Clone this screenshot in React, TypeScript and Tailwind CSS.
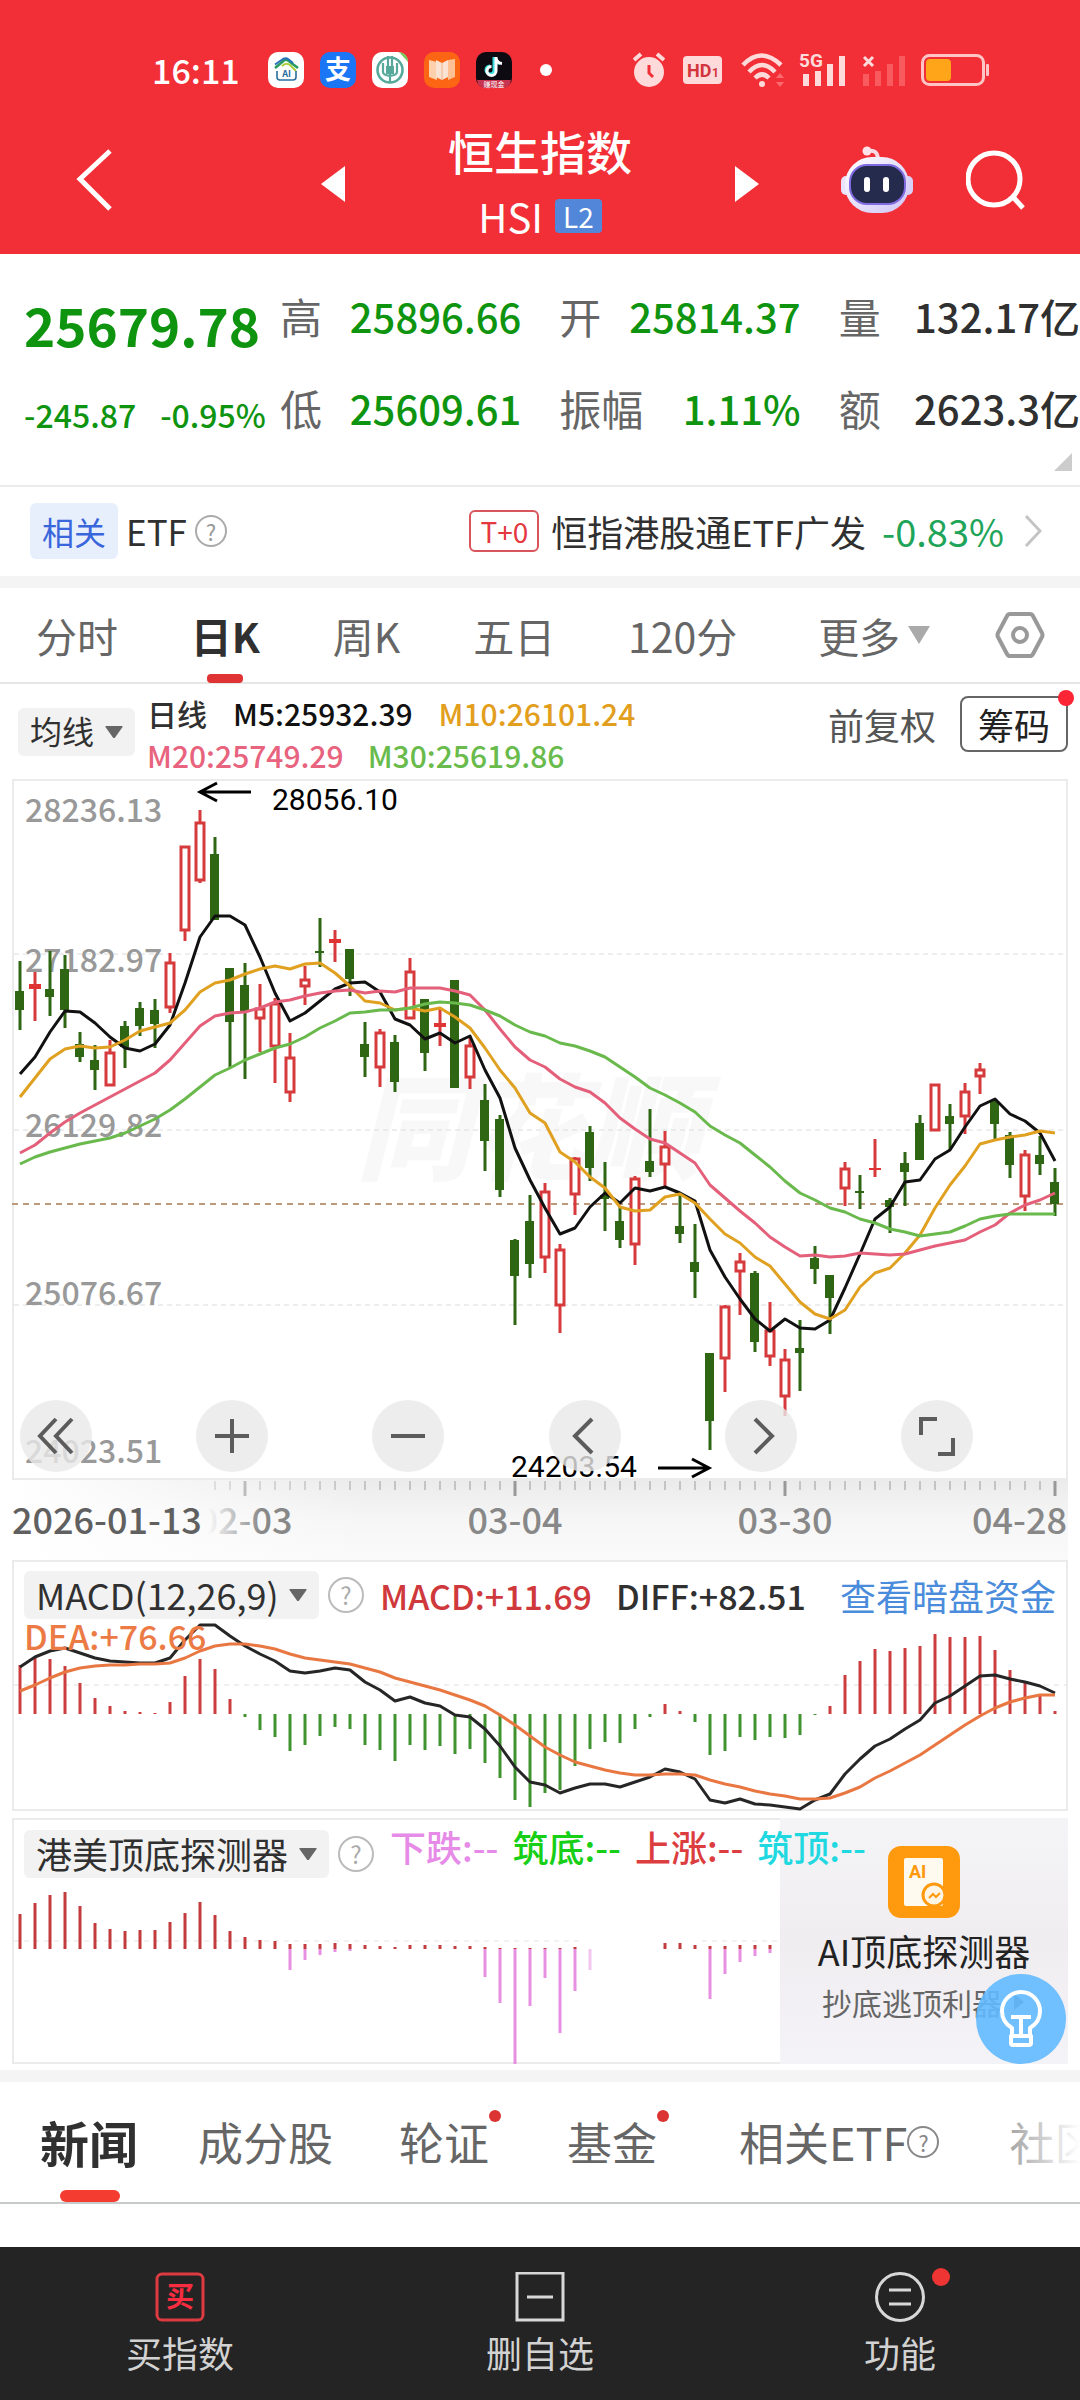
import type { ReactNode } from 'react'

const STEP = 15
const X0 = 8

const xAt = (i: number) => X0 + i * STEP
const linePoints = (ys: number[]) => ys.map((y, i) => `${xAt(i)},${y}`).join(' ')

// [high, body top, body bottom, low, rising]
const candles: [number, number, number, number, number][] = [
  [182, 212, 231, 251, 0], [193, 205, 210, 242, 1], [172, 210, 218, 237, 0], [176, 190, 231, 249, 0],
  [253, 265, 278, 283, 0], [266, 281, 291, 311, 0], [261, 273, 307, 307, 1], [242, 247, 268, 289, 0],
  [223, 229, 247, 257, 0], [220, 231, 245, 269, 0], [174, 183, 229, 234, 1], [67, 67, 152, 162, 1],
  [31, 43, 102, 104, 1], [58, 75, 141, 141, 0], [189, 189, 243, 288, 0], [184, 206, 232, 300, 0],
  [205, 229, 240, 273, 1], [219, 224, 268, 304, 1], [254, 278, 314, 323, 1], [187, 200, 208, 226, 1],
  [139, 172, 174, 188, 0], [151, 160, 164, 183, 1], [170, 170, 200, 217, 0], [243, 265, 278, 298, 0],
  [250, 253, 289, 308, 1], [256, 263, 303, 313, 0], [179, 192, 240, 240, 1], [220, 220, 274, 292, 0],
  [228, 244, 248, 267, 1], [201, 201, 309, 309, 0], [258, 266, 299, 310, 1], [305, 321, 362, 392, 0],
  [336, 340, 411, 418, 0], [460, 461, 497, 546, 0], [416, 442, 485, 499, 0], [404, 412, 479, 494, 1],
  [465, 470, 527, 554, 1], [378, 379, 416, 436, 1], [347, 353, 389, 402, 0], [383, 416, 420, 452, 0],
  [428, 442, 461, 469, 0], [397, 399, 466, 486, 1], [330, 382, 393, 398, 0], [352, 367, 386, 407, 1],
  [414, 447, 455, 464, 0], [445, 483, 493, 519, 0], [574, 574, 642, 671, 0], [526, 527, 580, 613, 1],
  [474, 482, 493, 536, 1], [492, 494, 563, 573, 0], [523, 551, 578, 587, 1], [570, 580, 618, 637, 1],
  [541, 569, 574, 612, 0], [467, 479, 490, 505, 0], [496, 496, 519, 555, 0], [383, 389, 410, 427, 1],
  [396, 412, 414, 430, 0], [360, 389, 391, 398, 1], [419, 421, 428, 454, 0], [373, 384, 393, 427, 0],
  [336, 344, 381, 381, 0], [305, 305, 352, 352, 1], [325, 337, 345, 371, 0], [304, 312, 338, 355, 1],
  [284, 290, 298, 315, 1], [320, 322, 345, 361, 0], [353, 356, 386, 399, 0], [371, 375, 418, 432, 1],
  [357, 376, 385, 396, 0], [389, 403, 425, 437, 0],
]

const ma5 = [
  295, 278, 253, 232, 233, 244, 258, 269, 272, 265, 246, 204, 158, 137, 137, 146, 178, 214, 242, 234, 222, 210, 204,
  203, 213, 240, 246, 260, 254, 264, 257, 291, 319, 369, 401, 429, 455, 449, 428, 414, 424, 409, 412, 408, 414, 422,
  471, 498, 520, 540, 552, 540, 549, 550, 541, 509, 475, 440, 428, 403, 401, 380, 371, 348, 327, 320, 335, 342, 354,
  382,
]
const ma10 = [
  318, 299, 280, 270, 267, 269, 268, 261, 252, 248, 244, 231, 213, 204, 201, 195, 190, 187, 190, 185, 184, 194, 207,
  222, 224, 231, 229, 232, 229, 238, 249, 269, 291, 309, 334, 344, 373, 383, 398, 409, 428, 432, 431, 418, 415, 424,
  440, 455, 464, 478, 487, 505, 523, 535, 540, 531, 508, 494, 489, 474, 456, 429, 406, 387, 365, 361, 358, 356, 352,
  354,
]
const ma20 = [
  374, 366, 354, 343, 334, 326, 318, 310, 302, 294, 281, 264, 247, 237, 234, 233, 229, 223, 221, 217, 214, 212, 211,
  214, 212, 213, 209, 209, 209, 212, 216, 231, 250, 268, 281, 288, 300, 308, 313, 324, 339, 350, 360, 364, 374, 384,
  406, 419, 432, 444, 458, 468, 477, 476, 478, 477, 474, 475, 476, 475, 471, 467, 464, 461, 453, 446, 434, 426, 421,
  414,
]
const ma30 = [
  385, 378, 373, 369, 365, 362, 359, 354, 347, 340, 331, 320, 308, 296, 289, 281, 275, 269, 265, 258, 249, 242, 234,
  233, 231, 231, 229, 225, 223, 224, 226, 231, 237, 246, 253, 257, 264, 267, 272, 278, 288, 298, 309, 316, 324, 333,
  347, 356, 364, 376, 388, 402, 414, 421, 429, 433, 440, 444, 450, 453, 457, 455, 453, 447, 440, 437, 435, 435, 435,
  435,
]

const macdBars = [
  49, 56, 55, 48, 31, 16, 8, 3, 2, 1, 12, 38, 55, 45, 15, -3, -16, -23, -37, -31, -22, -13, -15, -31, -36, -47, -31,
  -36, -32, -40, -35, -49, -64, -86, -93, -79, -76, -52, -35, -28, -29, -15, -3, 10, 3, -8, -41, -37, -23, -26, -23,
  -24, -21, -1, 8, 39, 53, 65, 63, 66, 68, 80, 77, 77, 78, 64, 44, 31, 18, 3,
]
const diff = [
  107, 97, 91, 88, 93, 98, 101, 102, 103, 103, 98, 80, 65, 65, 76, 86, 94, 101, 111, 113, 111, 108, 110, 122, 130, 141,
  137, 143, 146, 155, 157, 169, 186, 207, 222, 225, 233, 228, 224, 224, 227, 222, 217, 209, 212, 219, 240, 243, 239,
  244, 245, 247, 249, 240, 234, 214, 199, 186, 179, 169, 160, 143, 136, 126, 116, 115, 119, 122, 126, 133,
]
const dea = [
  131, 125, 118, 112, 108, 106, 105, 105, 104, 104, 103, 98, 91, 86, 84, 84, 86, 89, 94, 98, 100, 102, 104, 108, 112,
  118, 122, 126, 130, 135, 140, 146, 155, 165, 176, 187, 195, 202, 206, 210, 213, 215, 215, 214, 214, 215, 220, 224,
  227, 231, 234, 236, 239, 239, 238, 233, 227, 218, 211, 203, 195, 185, 175, 165, 156, 148, 142, 138, 135, 135,
]

const detectorUp = [
  35, 46, 54, 57, 43, 26, 20, 18, 19, 19, 27, 36, 47, 34, 18, 12, 9, 8, 5, 5, 5, 6, 5, 4, 3, 2, 4, 4, 4, 3, 3, 2, 1, 1,
  1, 1, 1, 2, 0, 0, 0, 0, 0, 6, 6, 4, 3, 3, 4, 4, 4,
]
const detectorDown: [number, number][] = [
  [18, 21], [19, 11], [20, 6], [21, 3], [22, 2], [31, 28], [32, 54], [33, 115], [34, 57], [35, 29], [36, 84], [37, 42],
  [38, 21], [46, 50], [47, 25], [48, 13], [49, 7], [50, 4],
]

const stats = [
  { label: '高', value: '25896.66', color: 'text-[#0f9410]' },
  { label: '开', value: '25814.37', color: 'text-[#0f9410]' },
  { label: '量', value: '132.17亿', color: 'text-[#303030]' },
  { label: '低', value: '25609.61', color: 'text-[#0f9410]' },
  { label: '振幅', value: '1.11%', color: 'text-[#0f9410]' },
  { label: '额', value: '2623.3亿', color: 'text-[#303030]' },
]

function Triangle({ className }: { className: string }) {
  return (
    <svg viewBox="0 0 20 14" className={className} fill="currentColor" aria-hidden="true">
      <path d="M1 0h18q1 0 .5 1L11 13q-1 1-2 0L.5 1Q0 0 1 0Z" />
    </svg>
  )
}

function Help({ className }: { className: string }) {
  return (
    <button
      type="button"
      aria-label="说明"
      className={`flex shrink-0 items-center justify-center rounded-full border-2 ${className}`}
    >
      ?
    </button>
  )
}

function Dropdown({ label, value, className = '' }: { label: string; value: string; className?: string }) {
  return (
    <span className={`relative inline-flex h-12 shrink-0 items-center rounded-md bg-[#f2f2f2] text-[#303030] ${className}`}>
      <select aria-label={label} className="h-14 appearance-none bg-transparent pb-1 pl-3 pr-10 outline-none">
        <option>{value}</option>
      </select>
      <Triangle className="pointer-events-none absolute right-3 w-[18px] text-[#666]" />
    </span>
  )
}

function StatusBar() {
  return (
    <div className="flex h-[90px] items-end justify-between pl-[152px] pr-[91px] pt-[50px] text-white">
      <div className="flex h-10 items-center gap-4">
        <span className="mr-3 text-[34px] font-medium leading-10">16:11</span>
        <svg viewBox="0 0 36 36" className="size-9">
          <rect width="36" height="36" rx="10" fill="#fff" />
          <path d="M7 16 16 8.500q2-1.500 4 0L30 16" fill="none" stroke="#2a9c63" strokeWidth="2.600" />
          <path d="M7 12.500 15 7q3-1.500 5 0l5 4" fill="none" stroke="#2873b8" strokeWidth="2" />
          <path d="M14 14q4-4 8-1l6 6" fill="none" stroke="#a8cf3d" strokeWidth="2" />
          <path d="M9 19v6q0 3 3 3h13q3 0 3-3v-6" fill="none" stroke="#2a6f9e" strokeWidth="1.600" />
          <text x="18.500" y="25" textAnchor="middle" fontSize="9" fontWeight="700" fill="#1d6b9a">AI</text>
        </svg>
        <svg viewBox="0 0 36 36" className="size-9 overflow-visible">
          <rect width="36" height="36" rx="10" fill="#1b76f5" />
          <text x="18" y="27" textAnchor="middle" fontSize="26" fontWeight="700" fill="#fff">支</text>
        </svg>
        <svg viewBox="0 0 36 36" className="size-9">
          <rect width="36" height="36" rx="10" fill="#fff" />
          <path d="M27 0q9 1 9 10Z" fill="#7cc65a" />
          <circle cx="18" cy="18" r="12.500" fill="none" stroke="#56a99a" strokeWidth="2.600" />
          <path d="M16 4v10M20 4v10M18 14v17M11 11v9q0 3 7 4M25 11v9q0 3-7 4" fill="none" stroke="#56a99a" strokeWidth="2.200" />
          <path d="M14 14h8v8h-8Z" fill="#56a99a" />
        </svg>
        <svg viewBox="0 0 36 36" className="size-9">
          <rect width="36" height="36" rx="10" fill="#fb6513" />
          <path d="m5 8 8 2v18l-8-3Z" fill="#ffd0ac" />
          <path d="m12 8 6 3 6-3v17l-6 3-6-3Z" fill="#fbe3d3" />
          <path d="m24 8 7-1v18l-7 3Z" fill="#ffc194" />
          <path d="M18 11v17" stroke="#f0b48d" />
        </svg>
        <svg viewBox="0 0 36 36" className="size-9 overflow-visible">
          <rect width="36" height="36" rx="10" fill="#0d0a12" />
          <path d="M1 28h34q-1 8-9 8H10q-8 0-9-8Z" fill="#c8334f" />
          <path d="M18 5v13a4 4 0 1 1-4-4M18 6q1 5 6 5.500" fill="none" stroke="#35dfe0" strokeWidth="3" />
          <path d="M20 5v14a4.500 4.500 0 1 1-4.500-4.500M20 6q1 5 6 5.500" fill="none" stroke="#fff" strokeWidth="3" />
          <text x="18" y="35" textAnchor="middle" fontSize="7" fill="#fff">赚现金</text>
        </svg>
        <span className="ml-3 size-3 rounded-full bg-white" />
      </div>
      <div className="flex h-10 items-center gap-[14px] text-[#ffdada]">
        <svg viewBox="0 0 32 36" className="mr-1 h-9 w-8" fill="currentColor">
          <circle cx="16" cy="20" r="15" />
          <path d="m1 8 7-6M31 8l-7-6" stroke="currentColor" strokeWidth="4" />
          <path d="M16 13v8l4 4" stroke="#f02f36" strokeWidth="3" fill="none" />
        </svg>
        <svg viewBox="0 0 40 30" className="mr-1 h-[30px] w-10">
          <rect x="0" y="1" width="39" height="28" rx="4" fill="currentColor" />
          <text x="4" y="22" fontSize="18" fontWeight="700" fontFamily="Roboto, sans-serif" fill="#d2353c">HD</text>
          <text x="29" y="22" fontSize="12" fontWeight="700" fontFamily="Roboto, sans-serif" fill="#d2353c">1</text>
        </svg>
        <svg viewBox="0 0 44 36" className="h-9 w-11" fill="none" stroke="currentColor" strokeWidth="4.500">
          <path d="M2 13q18-19 38 0M8 20q13-14 26 0M14 26q7-7 14 0" />
          <circle cx="21" cy="32" r="3" fill="currentColor" stroke="none" />
          <path d="m35 26 4-5 4 5ZM35 30l4 5 4-5Z" fill="#fa6a6e" stroke="none" />
        </svg>
        <svg viewBox="0 0 48 36" className="h-9 w-12 overflow-visible" fill="currentColor">
          <text x="0" y="15" fontSize="19" fontWeight="700" fontFamily="Roboto, sans-serif">5G</text>
          <path d="M4 22h6v12H4ZM16 19h6v15h-6ZM28 12h6v22h-6ZM40 4h6v30h-6Z" />
        </svg>
        <svg viewBox="0 0 46 36" className="h-9 w-[46px]">
          <path d="m3 5 9 9M12 5l-9 9" stroke="currentColor" strokeWidth="3" />
          <path d="M2 22h6v12H2ZM14 19h6v15h-6ZM26 12h6v22h-6ZM38 4h6v30h-6Z" fill="#f85a5e" />
        </svg>
        <svg viewBox="0 0 68 32" className="h-8 w-[68px]">
          <rect x="1.500" y="1.500" width="61" height="29" rx="7" fill="none" stroke="#ffc4c4" strokeWidth="3" />
          <rect x="5" y="5" width="25" height="22" rx="4" fill="#ffa51a" />
          <rect x="65" y="10" width="3" height="12" rx="1" fill="#ffc4c4" />
        </svg>
      </div>
    </div>
  )
}

function Header() {
  return (
    <header className="bg-[#f22f36] text-white">
      <StatusBar />
      <div className="grid grid-cols-[1fr_438px_1fr] items-center pb-1 pt-7">
        <button type="button" aria-label="返回" className="justify-self-start pb-2 pl-[76px]">
          <svg viewBox="0 0 38 64" className="h-16 w-[38px]" fill="none" stroke="currentColor" strokeWidth="5">
            <path d="M34 3 4 31l30 30" />
          </svg>
        </button>
        <div className="flex items-center justify-between">
          <button type="button" aria-label="上一个">
            <svg viewBox="0 0 24 36" className="h-9 w-6" fill="currentColor"><path d="M24 0v36L0 18Z" /></svg>
          </button>
          <div className="text-center">
            <h1 className="text-[46px] font-medium leading-[64px]">恒生指数</h1>
            <p className="flex items-center justify-center gap-3 text-[40px] leading-[68px]">
              HSI
              <span className="rounded-sm bg-[#5286d8] px-2 text-[28px] leading-[34px]">L2</span>
            </p>
          </div>
          <button type="button" aria-label="下一个">
            <svg viewBox="0 0 24 36" className="h-9 w-6" fill="currentColor"><path d="M0 0v36l24-18Z" /></svg>
          </button>
        </div>
        <div className="flex items-center justify-end gap-[53px] pb-2 pr-[54px]">
          <button type="button" aria-label="智能助手">
            <svg viewBox="0 0 72 68" className="h-[68px] w-[72px]">
              <defs>
                <linearGradient id="shell" x1="0" y1="0" x2="1" y2="1">
                  <stop offset="0" stopColor="#fff" />
                  <stop offset="1" stopColor="#cfc4f6" />
                </linearGradient>
              </defs>
              <path d="M27 5q10-2 10 9" fill="none" stroke="#fbd9e4" strokeWidth="4" />
              <circle cx="26" cy="5" r="4.500" fill="#ffe3e8" />
              <rect x="0" y="30" width="10" height="19" rx="5" fill="#e9e4fb" />
              <rect x="62" y="30" width="10" height="19" rx="5" fill="#d9d0f8" />
              <rect x="4" y="11" width="64" height="56" rx="27" fill="url(#shell)" />
              <rect x="9" y="19" width="55" height="39" rx="17" fill="#252b4d" stroke="#7f6ae0" strokeWidth="2" />
              <rect x="23" y="31" width="6" height="15" rx="3" fill="#fff" />
              <rect x="42" y="31" width="6" height="15" rx="3" fill="#fff" />
            </svg>
          </button>
          <button type="button" aria-label="搜索">
            <svg viewBox="0 0 60 60" className="size-[60px]" fill="none" stroke="currentColor" strokeWidth="5">
              <circle cx="28" cy="29" r="26" />
              <path d="m48 48 9 10" />
            </svg>
          </button>
        </div>
      </div>
    </header>
  )
}

function Quote() {
  return (
    <section className="relative flex items-start pb-[41px] pl-6 pt-8 leading-[60px]">
      <div className="mt-2 flex w-[256px] shrink-0 flex-col gap-[30px] text-[#0f9410]">
        <strong className="text-[53px] font-bold">25679.78</strong>
        <p className="flex gap-6 whitespace-nowrap text-[32px] font-medium">
          <span>-245.87</span>
          <span>-0.95%</span>
        </p>
      </div>
      <dl className="grid flex-1 grid-cols-3 gap-x-[38px] gap-y-8 text-[42px]">
        {stats.map((s) => (
          <div key={s.label} className="flex items-center justify-between whitespace-nowrap">
            <dt className="text-[#666]">{s.label}</dt>
            <dd className={`text-[40px] font-medium ${s.color}`}>{s.value}</dd>
          </div>
        ))}
      </dl>
      <svg viewBox="0 0 18 18" className="absolute bottom-3.5 right-2 size-[18px]" fill="#ccc" aria-hidden="true">
        <path d="M18 0v18H0Z" />
      </svg>
    </section>
  )
}

function RelatedEtf() {
  return (
    <section className="flex items-center justify-between border-t-2 border-[#ebebeb] pb-[17px] pl-[30px] pr-[38px] pt-4 text-[#303030]">
      <div className="flex items-center gap-2 text-[35px] leading-[56px]">
        <span className="rounded-md bg-[#e8effc] px-3 text-[32px] text-[#3a66dc]">相关</span>
        ETF
        <Help className="size-8 border-[#aaa] text-[22px] leading-none text-[#999]" />
      </div>
      <a href="#etf" className="flex items-center text-[36px] leading-[56px]">
        <span className="mr-3 rounded-md border-2 border-[#d8555b] px-[9px] text-[28px] leading-[38px] text-[#e5373f]">T+0</span>
        恒指港股通ETF广发
        <span className="ml-4 text-[38px] text-[#1fa55a]">-0.83%</span>
        <svg viewBox="0 0 18 34" className="ml-5 h-[34px] w-[18px]" fill="none" stroke="#c4c4c4" strokeWidth="3">
          <path d="m2 2 14 15L2 32" />
        </svg>
      </a>
    </section>
  )
}

function PeriodTabs() {
  return (
    <nav className="flex items-center justify-between border-b-2 border-[#e6e6e6] pb-[17px] pl-9 pr-[35px] pt-[17px] text-[41px] leading-[60px] text-[#666]">
      <button type="button">分时</button>
      <button type="button" className="relative font-bold text-[#303030]">
        日K
        <span className="absolute -bottom-[18px] left-1/2 h-[9px] w-9 -translate-x-1/2 rounded-sm bg-[#e03333]" />
      </button>
      <button type="button">周K</button>
      <button type="button">五日</button>
      <button type="button">120分</button>
      <button type="button" aria-haspopup="menu" className="-mr-2 ml-2 flex items-center gap-2">
        更多
        <svg viewBox="0 0 22 18" className="w-[22px]" fill="#aaa"><path d="M0 0h22L11 18Z" /></svg>
      </button>
      <button type="button" aria-label="设置">
        <svg viewBox="0 0 50 46" className="h-[46px] w-[50px]" fill="none" stroke="#999" strokeWidth="4">
          <path d="M15 2h20q2 0 3 2l9 17q1 2 0 4l-9 17q-1 2-3 2H15q-2 0-3-2L3 25q-1-2 0-4L12 4q1-2 3-2Z" />
          <circle cx="25" cy="23" r="7" />
        </svg>
      </button>
    </nav>
  )
}

function Averages() {
  return (
    <div className="flex items-center pb-[3px] pl-[18px] pr-3 pt-2">
      <Dropdown label="指标" value="均线" className="mb-1 text-[32px]" />
      <div className="ml-3 flex-1 whitespace-nowrap text-[30px] font-medium leading-[42px]">
        <p className="flex gap-[26px]">
          <span className="text-[#303030]">日线</span>
          <span className="text-[#111]">M5:25932.39</span>
          <span className="text-[#e29e1d]">M10:26101.24</span>
        </p>
        <p className="flex gap-6">
          <span className="text-[#e8637d]">M20:25749.29</span>
          <span className="text-[#69bb4c]">M30:25619.86</span>
        </p>
      </div>
      <div className="mb-5 flex shrink-0 items-center gap-6">
        <button type="button" className="text-[36px] text-[#555]">前复权</button>
        <button type="button" className="relative rounded-lg border-2 border-[#666] px-4 text-[36px] leading-[52px] text-[#222]">
          筹码
          <span className="absolute -right-2 -top-2 size-4 rounded-full bg-[#fb2535]" />
        </button>
      </div>
    </div>
  )
}

function RoundButton({ label, children }: { label: string; children: ReactNode }) {
  return (
    <button
      type="button"
      aria-label={label}
      className="flex size-[72px] items-center justify-center rounded-full bg-[#e8e8e8]/80"
    >
      <svg viewBox="0 0 40 40" className="size-10" fill="none" stroke="#5c5c5c" strokeWidth="4">
        {children}
      </svg>
    </button>
  )
}

function PriceChart() {
  return (
    <div className="relative">
      <svg viewBox="0 0 1056 701" className="block w-full overflow-visible">
        <rect x="1" y="1" width="1054" height="699" fill="none" stroke="#ebebeb" strokeWidth="2" />
        <text x="344" y="392" fontSize="115" fontWeight="900" fontStyle="italic" fill="#f8f8f8">同花顺</text>
        <path d="M2 175h1052M2 351h1052M2 526h1052" stroke="#dcdcdc" strokeWidth="1" strokeDasharray="5 4" />
        <path d="M0 425h1052" stroke="#bd9a7c" strokeWidth="2" strokeDasharray="6 5" />
        <g fontSize="32" fontWeight="500" fill="#999">
          <text x="13" y="43">28236.13</text>
          <text x="13" y="193">27182.97</text>
          <text x="13" y="358">26129.82</text>
          <text x="13" y="526">25076.67</text>
          <text x="13" y="684">24023.51</text>
        </g>
        {candles.map(([high, top, bottom, low, rising], i) => (
          <g key={i} stroke={rising ? '#d63a3d' : '#2f6614'}>
            <path d={`M${xAt(i)} ${high}V${top}M${xAt(i)} ${bottom}V${low}`} strokeWidth="3" />
            {rising && bottom - top > 6 ? (
              <rect x={xAt(i) - 4} y={top + 1} width="8" height={bottom - top - 2} fill="#fff" strokeWidth="3" />
            ) : (
              <rect
                x={xAt(i) - (rising ? 6 : 5)}
                y={top}
                width={rising ? 12 : 9}
                height={bottom - top}
                fill={rising ? '#e03333' : '#2f6614'}
                stroke="none"
              />
            )}
          </g>
        ))}
        <g fill="none" strokeWidth="3" strokeLinejoin="round">
          <polyline points={linePoints(ma5)} stroke="#111" />
          <polyline points={linePoints(ma10)} stroke="#e0a020" />
          <polyline points={linePoints(ma20)} stroke="#e4607a" />
          <polyline points={linePoints(ma30)} stroke="#69b94c" />
        </g>
        <g fill="none" stroke="#000" strokeWidth="3">
          <path d="M239 13h-50M205 4 188 13l17 9M646 689h50M680 680l17 9-17 9" />
        </g>
        <g fontFamily="Roboto, sans-serif" fontSize="30" fill="#000">
          <text x="260" y="31">28056.10</text>
          <text x="499" y="698">24203.54</text>
        </g>
      </svg>
      <div className="absolute bottom-2 left-2 right-[95px] flex justify-between">
        <RoundButton label="最早"><path d="M20 3 4 20l16 17M36 3 20 20l16 17" /></RoundButton>
        <RoundButton label="放大"><path d="M20 3v34M3 20h34" /></RoundButton>
        <RoundButton label="缩小"><path d="M3 20h34" /></RoundButton>
        <RoundButton label="左移"><path d="M27 3 10 20l17 17" /></RoundButton>
        <RoundButton label="右移"><path d="m14 3 17 17-17 17" /></RoundButton>
        <RoundButton label="全屏"><path d="M4 19V3h16M36 22v16H21" /></RoundButton>
      </div>
    </div>
  )
}

function TimeAxis() {
  return (
    <svg viewBox="0 0 1056 80" className="block w-full">
      <defs>
        <linearGradient id="axisShade" x1="0" y1="0" x2="0" y2="1">
          <stop offset="0" stopColor="#ebebeb" />
          <stop offset="0.500" stopColor="#f6f6f6" />
          <stop offset="1" stopColor="#fafafa" />
        </linearGradient>
        <linearGradient id="axisFade" x1="0" y1="0" x2="1" y2="0">
          <stop offset="0" stopColor="#fff" />
          <stop offset="1" stopColor="#fff" stopOpacity="0" />
        </linearGradient>
        <linearGradient id="dateFade" gradientUnits="userSpaceOnUse" x1="190" y1="0" x2="250" y2="0">
          <stop offset="0.100" stopColor="#888" stopOpacity="0" />
          <stop offset="1" stopColor="#888" />
        </linearGradient>
      </defs>
      <rect width="1056" height="80" fill="url(#axisShade)" />
      {candles.map((_, i) =>
        i < 13 ? null : i % 18 === 15 ? (
          <path key={i} d={`M${xAt(i)} 1v15`} stroke="#999" strokeWidth="3" />
        ) : (
          <path key={i} d={`M${xAt(i)} 1v9`} stroke="#c4c4c4" strokeWidth="2" />
        ),
      )}
      <rect width="360" height="80" fill="url(#axisFade)" />
      <g fontSize="36" fontWeight="500" fill="#888">
        <text x="233" y="54" textAnchor="middle" fill="url(#dateFade)">02-03</text>
        <text x="503" y="54" textAnchor="middle">03-04</text>
        <text x="773" y="54" textAnchor="middle">03-30</text>
        <text x="1055" y="54" textAnchor="end">04-28</text>
        <text x="0" y="54" fill="#606060">2026-01-13</text>
      </g>
    </svg>
  )
}

function MacdPanel() {
  return (
    <section className="grid">
      <svg viewBox="0 0 1056 251" className="col-start-1 row-start-1 block w-full">
        <rect x="1" y="1" width="1054" height="249" fill="#fff" stroke="#ebebeb" strokeWidth="2" />
        <path d="M2 125h1052" stroke="#e0e0e0" strokeDasharray="5 5" />
        {macdBars.map((v, i) => (
          <path key={i} d={`M${xAt(i)} 154v${-v}`} stroke={v > 0 ? '#cc3d3f' : '#3f9430'} strokeWidth="3" />
        ))}
        <g fill="none" strokeWidth="3" strokeLinejoin="round">
          <polyline points={linePoints(diff)} stroke="#262626" />
          <polyline points={linePoints(dea)} stroke="#e97742" />
        </g>
      </svg>
      <div className="z-10 col-start-1 row-start-1 whitespace-nowrap px-3 pt-2 text-[34px]">
        <div className="flex items-center">
          <Dropdown label="副图指标" value="MACD(12,26,9)" className="text-[36px]" />
          <Help className="ml-[9px] size-9 border-[#bbb] text-[24px] leading-none text-[#aaa]" />
          <span className="ml-4 font-medium text-[#d0393c]">MACD:+11.69</span>
          <span className="ml-6 font-medium text-[#303030]">DIFF:+82.51</span>
          <a href="#funds" className="ml-auto text-[36px] text-[#4a8cdb]">查看暗盘资金</a>
        </div>
        <p className="font-medium leading-7 text-[#ec7a45]">DEA:+76.66</p>
      </div>
    </section>
  )
}

function DetectorPanel() {
  return (
    <section className="mt-[7px] grid">
      <svg viewBox="0 0 1056 246" className="col-start-1 row-start-1 block w-full overflow-visible">
        <rect x="1" y="1" width="1054" height="244" fill="#fff" stroke="#ebebeb" strokeWidth="2" />
        <path d="M2 123h570M690 123h76" stroke="#e4e4e4" strokeDasharray="5 5" />
        {detectorDown.map(([i, v]) => (
          <path key={i} d={`M${xAt(i)} 131v${v}`} stroke="#e78fe0" strokeWidth="3" opacity={i === 38 ? 0.5 : 1} />
        ))}
        {detectorUp.map((v, i) => (
          <path key={i} d={`M${xAt(i)} 131v${-v}`} stroke="#c23b3d" strokeWidth="3" />
        ))}
      </svg>
      <a
        href="#detector"
        className="col-start-1 row-start-1 flex w-[288px] flex-col items-center justify-self-end bg-linear-to-b from-[#f4f4f7] via-[#f0edf0] to-[#f4f3f8] pt-7"
      >
        <svg viewBox="0 0 72 72" className="size-[72px]">
          <rect width="72" height="72" rx="13" fill="#ff990d" />
          <rect x="16" y="12" width="39" height="48" rx="2" fill="#fffaf0" />
          <text x="21" y="32" fontSize="18" fontWeight="700" fontFamily="Roboto, sans-serif" fill="#ff990d">AI</text>
          <circle cx="46" cy="49" r="11" fill="#fff5e4" stroke="#ff990d" strokeWidth="3" />
          <path d="m41 52 4-4 3 3 4-4" fill="none" stroke="#ff990d" strokeWidth="2" />
        </svg>
        <span className="mt-2 text-[36px] leading-[48px] text-[#222]">AI顶底探测器</span>
        <span className="mt-1 flex items-center gap-3 self-start pl-[42px] text-[30px] leading-[48px] text-[#666]">
          抄底逃顶利器
          <svg viewBox="0 0 10 16" className="h-4 w-2.5" fill="#666"><path d="M0 0v16l10-8Z" /></svg>
        </span>
      </a>
      <div className="z-10 col-start-1 row-start-1 flex items-center self-start whitespace-nowrap pl-3 pt-3 text-[36px]">
        <Dropdown label="副图指标二" value="港美顶底探测器" />
        <Help className="ml-[9px] size-9 border-[#bbb] text-[24px] leading-none text-[#aaa]" />
        <p className="ml-4 flex gap-3.5 self-start font-medium leading-8">
          <span className="text-[#e78be8]">下跌:--</span>
          <span className="text-[#16cf16]">筑底:--</span>
          <span className="text-[#dc3d3f]">上涨:--</span>
          <span className="text-[#1fd8e0]">筑顶:--</span>
        </p>
      </div>
      <button
        type="button"
        aria-label="提示"
        className="z-10 col-start-1 row-start-1 mr-0.5 flex size-[90px] items-center justify-center self-end justify-self-end rounded-full bg-[#62b9ff]/90"
      >
        <svg viewBox="0 0 44 58" className="h-[58px] w-11" fill="none" stroke="#fff" strokeWidth="4" strokeLinejoin="round">
          <path d="M13 46v-8Q3 32 3 21a19 19 0 0 1 38 0q0 11-10 17v8ZM12 27h20M22 27v18" />
          <path d="M12 46h20v7q0 2-2 2H14q-2 0-2-2Z" />
        </svg>
      </button>
    </section>
  )
}

function NewsTabs() {
  return (
    <nav className="relative flex items-center overflow-hidden whitespace-nowrap border-b-2 border-[#c6cacb] pb-7 pl-10 pt-7 text-[45px] leading-[64px] text-[#666]">
      <button type="button" className="text-[49px] font-bold text-[#303030]">
        新闻
        <span className="absolute bottom-0 left-[60px] h-3 w-[60px] rounded-md bg-[#f53c31]" />
      </button>
      <button type="button" className="ml-[60px]">成分股</button>
      <button type="button" className="relative ml-[66px]">
        轮证
        <span className="absolute -right-3 top-0 size-3 rounded-full bg-[#dc3333]" />
      </button>
      <button type="button" className="relative ml-[78px]">
        基金
        <span className="absolute -right-3 top-0 size-3 rounded-full bg-[#dc3333]" />
      </button>
      <button type="button" className="ml-[82px]">相关ETF</button>
      <Help className="size-8 border-[#888] text-[22px] leading-none text-[#888]" />
      <button type="button" className="ml-[70px]">社区</button>
      <span className="pointer-events-none absolute inset-y-0 right-0 w-24 bg-linear-to-r from-white/20 to-white" />
    </nav>
  )
}

function BottomBar() {
  return (
    <footer className="grid grid-cols-3 bg-[#242424] pb-[22px] pt-[25px] text-[36px] leading-[52px] text-[#d2d2d2]">
      <button type="button" className="flex flex-col items-center gap-1">
        <svg viewBox="0 0 50 50" className="size-[50px]">
          <rect x="2" y="2" width="46" height="46" rx="5" fill="none" stroke="#dd3b40" strokeWidth="3" />
          <text x="25" y="35" textAnchor="middle" fontSize="28" fontWeight="700" fill="#fa2c40">买</text>
        </svg>
        买指数
      </button>
      <button type="button" className="flex flex-col items-center gap-1">
        <svg viewBox="0 0 50 50" className="size-[50px]" fill="none" stroke="#d8d8d8" strokeWidth="3">
          <rect x="2" y="1" width="46" height="47" />
          <path d="M12 25h26" />
        </svg>
        删自选
      </button>
      <button type="button" className="flex flex-col items-center gap-1">
        <span className="relative">
          <svg viewBox="0 0 52 50" className="block h-[50px] w-[52px]" fill="none" stroke="#d8d8d8" strokeWidth="3">
            <circle cx="26" cy="25" r="23.500" />
            <path d="M15 18h22M15 32h22" />
          </svg>
          <span className="absolute -right-6 -top-1 size-[18px] rounded-full bg-[#ee3534]" />
        </span>
        功能
      </button>
    </footer>
  )
}

export default function App() {
  return (
    <div className="flex min-h-screen flex-col bg-white font-['Noto_Sans_CJK_SC',sans-serif]">
      <Header />
      <main className="flex-1">
        <Quote />
        <RelatedEtf />
        <div className="h-3 bg-[#f4f4f4]" />
        <PeriodTabs />
        <Averages />
        <div className="px-3 pb-1.5">
          <PriceChart />
          <TimeAxis />
          <MacdPanel />
          <DetectorPanel />
        </div>
        <div className="h-3 bg-[#f4f4f4]" />
        <NewsTabs />
      </main>
      <BottomBar />
    </div>
  )
}
